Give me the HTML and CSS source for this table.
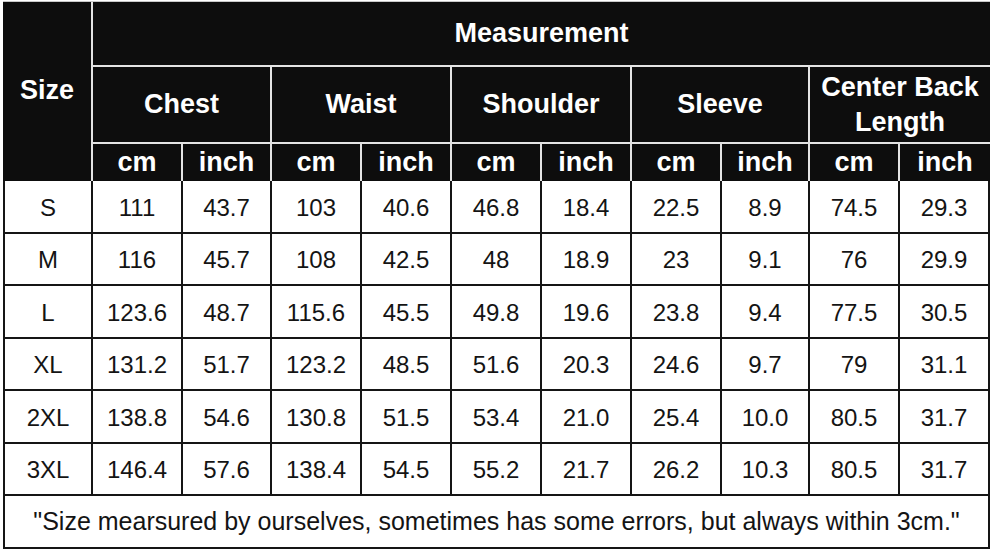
FILE: index.html
```html
<!DOCTYPE html>
<html>
<head>
<meta charset="utf-8">
<link rel="stylesheet" href="styles.css">
</head>
<body>
<table class="chart">
  <colgroup>
    <col class="c-size">
    <col class="c90"><col class="c89">
    <col class="c90"><col class="c90">
    <col class="c90"><col class="c90">
    <col class="c90"><col class="c88">
    <col class="c90"><col class="c90">
  </colgroup>
  <thead>
    <tr class="r-meas">
      <th class="h size" rowspan="3">Size</th>
      <th class="h last" colspan="10">Measurement</th>
    </tr>
    <tr class="r-group">
      <th class="h" colspan="2">Chest</th>
      <th class="h" colspan="2">Waist</th>
      <th class="h" colspan="2">Shoulder</th>
      <th class="h" colspan="2">Sleeve</th>
      <th class="h last two" colspan="2">Center Back<br>Length</th>
    </tr>
    <tr class="r-unit">
      <th class="h u">cm</th><th class="h u">inch</th>
      <th class="h u">cm</th><th class="h u">inch</th>
      <th class="h u">cm</th><th class="h u">inch</th>
      <th class="h u">cm</th><th class="h u">inch</th>
      <th class="h u">cm</th><th class="h u last">inch</th>
    </tr>
  </thead>
  <tbody>
    <tr class="r-data"><td class="first">S</td><td>111</td><td>43.7</td><td>103</td><td>40.6</td><td>46.8</td><td>18.4</td><td>22.5</td><td>8.9</td><td>74.5</td><td>29.3</td></tr>
    <tr class="r-data"><td class="first">M</td><td>116</td><td>45.7</td><td>108</td><td>42.5</td><td>48</td><td>18.9</td><td>23</td><td>9.1</td><td>76</td><td>29.9</td></tr>
    <tr class="r-data"><td class="first">L</td><td>123.6</td><td>48.7</td><td>115.6</td><td>45.5</td><td>49.8</td><td>19.6</td><td>23.8</td><td>9.4</td><td>77.5</td><td>30.5</td></tr>
    <tr class="r-data"><td class="first">XL</td><td>131.2</td><td>51.7</td><td>123.2</td><td>48.5</td><td>51.6</td><td>20.3</td><td>24.6</td><td>9.7</td><td>79</td><td>31.1</td></tr>
    <tr class="r-data"><td class="first">2XL</td><td>138.8</td><td>54.6</td><td>130.8</td><td>51.5</td><td>53.4</td><td>21.0</td><td>25.4</td><td>10.0</td><td>80.5</td><td>31.7</td></tr>
    <tr class="r-data"><td class="first">3XL</td><td>146.4</td><td>57.6</td><td>138.4</td><td>54.5</td><td>55.2</td><td>21.7</td><td>26.2</td><td>10.3</td><td>80.5</td><td>31.7</td></tr>
    <tr class="r-note"><td class="first note" colspan="11">"Size mearsured by ourselves, sometimes has some errors, but always within 3cm."</td></tr>
  </tbody>
</table>
</body>
</html>
```

FILE: styles.css
```css
html, body {
  margin: 0;
  padding: 0;
  background: #ffffff;
}

.chart {
  margin: 1px 0 0 3px;
  border-collapse: separate;
  border-spacing: 0;
  table-layout: fixed;
  width: 987px;
  font-family: "Liberation Sans", Arial, sans-serif;
  border-top: 1px solid #c8c8c8;
}

.c-size { width: 90px; }
.c89 { width: 89px; }
.c90 { width: 90px; }
.c88 { width: 88px; }

.chart th, .chart td {
  padding: 0;
  text-align: center;
  vertical-align: middle;
}

.h {
  background: #0d0d0d;
  color: #ffffff;
  font-weight: bold;
  font-size: 27px;
  border-right: 2px solid #e4e4e4;
  border-bottom: 2px solid #e4e4e4;
}

.h.size {
  border-bottom: none;
  padding-bottom: 2px;
}

.h.last {
  border-right: none;
}

.h.u {
  border-bottom: none;
}

.h.two {
  line-height: 35px;
}

.r-meas { height: 65px; }
.r-group { height: 77px; }
.r-unit { height: 37px; }
.r-data { height: 52.5px; }
.r-note { height: 53px; }

.chart td {
  color: #141414;
  font-size: 24px;
  padding-top: 3px;
  border-right: 2px solid #151515;
  border-bottom: 2px solid #151515;
}

.chart td.first {
  border-left: 2px solid #151515;
}

.chart td.note {
  font-size: 25px;
  padding-top: 1px;
  padding-bottom: 1px;
}
```
